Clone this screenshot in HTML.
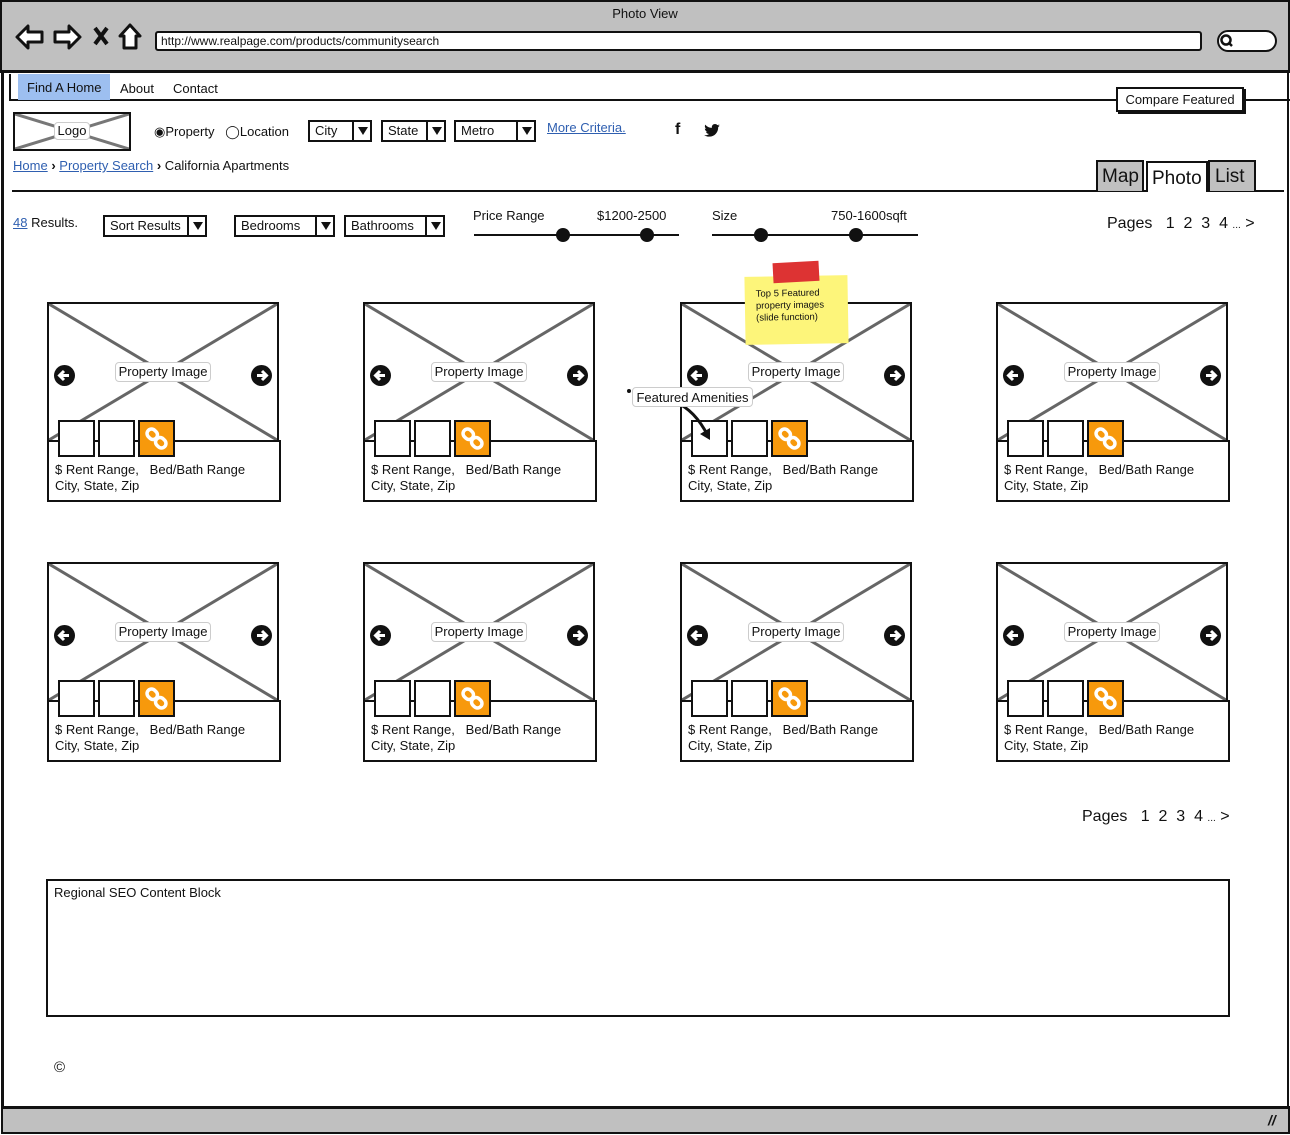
<!DOCTYPE html>
<html><head><meta charset="utf-8">
<style>
*{box-sizing:border-box;margin:0;padding:0}
body{width:1290px;height:1135px;position:relative;background:#fff;font-family:"Liberation Sans",sans-serif;font-size:13px;color:#111;overflow:hidden}
.a{position:absolute}
.lnk{color:#2f5fb0;text-decoration:underline}
.dd{position:absolute;height:22px;border:2px solid #111;background:#fff;padding-left:5px;line-height:18px;font-size:13px}
.dd b{position:absolute;right:0;top:0;width:18px;height:18px;border-left:2px solid #111}
.dd b:after{content:"";position:absolute;left:4px;top:5px;border-left:5px solid transparent;border-right:5px solid transparent;border-top:8px solid #111}
.card{position:absolute;width:236px;height:200px}
.img{position:absolute;left:0;top:0;width:232px;height:140px;border:2px solid #111;background:#fff}
.img svg{position:absolute;left:0;top:0}
.info{position:absolute;left:0;top:138px;width:234px;height:62px;border:2px solid #111;background:#fff;padding:20px 0 0 6px;line-height:16px;font-size:13px}
.th{position:absolute;top:118px;width:37px;height:37px;border:2px solid #111;background:#fff}
.th.o{background:#f7990c}
.arr{position:absolute;top:61px;width:21px;height:21px;border-radius:50%;background:#111}
.arr svg{position:absolute;left:0;top:0}
.lab{position:absolute;top:58px;left:66px;width:96px;height:20px;border:1px solid #ccc;border-radius:4px;background:#fff;text-align:center;line-height:18px;font-size:13px}
.dot{position:absolute;width:14px;height:14px;border-radius:50%;background:#111}
</style></head><body>
<div class="a" style="left:0;top:0;width:1290px;height:73px;background:#c0c0c0;border:2px solid #111;border-bottom:3px solid #111"></div>
<div class="a" style="left:0;top:6px;width:1290px;text-align:center;font-size:13px">Photo View</div>
<svg class="a" style="left:14px;top:22px" width="135" height="30" viewBox="0 0 135 30">
<path d="M3 15 L14 4 L14 10 L28 10 L28 20 L14 20 L14 26 Z" fill="#fff" stroke="#111" stroke-width="3" stroke-linejoin="round"/>
<path d="M66 15 L55 4 L55 10 L41 10 L41 20 L55 20 L55 26 Z" fill="#fff" stroke="#111" stroke-width="3" stroke-linejoin="round"/>
<path d="M81 6 L93 22 M93 6 L81 22" stroke="#111" stroke-width="4"/>
<path d="M106 14 L116 3 L126 14 L122 14 L122 26 L110 26 L110 14 Z" fill="#fff" stroke="#111" stroke-width="3" stroke-linejoin="round"/>
</svg>
<div class="a" style="left:155px;top:31px;width:1047px;height:20px;background:#fff;border:2px solid #111;border-radius:3px;padding-left:4px;line-height:16px;font-size:12px">http://www.realpage.com/products/communitysearch</div>
<div class="a" style="left:1217px;top:30px;width:60px;height:22px;background:#fff;border:2px solid #111;border-radius:11px"></div>
<svg class="a" style="left:1219px;top:33px" width="16" height="16"><circle cx="7" cy="7" r="4.5" stroke="#111" stroke-width="2.5" fill="none"/><path d="M10 10L13 13" stroke="#111" stroke-width="2.5"/></svg>
<div class="a" style="left:1px;top:73px;width:1288px;height:1036px;border-left:3px solid #111;border-right:2px solid #111"></div>
<div class="a" style="left:9px;top:74px;width:1281px;height:27px;border:2px solid #111;border-top:none;border-right:none"></div>
<div class="a" style="left:18px;top:74px;width:92px;height:26px;background:#9dbff0;line-height:28px;padding-left:9px">Find A Home</div>
<div class="a" style="left:120px;top:81px">About</div>
<div class="a" style="left:173px;top:81px">Contact</div>
<div class="a" style="left:1116px;top:87px;width:128px;height:25px;border:2px solid #111;background:#fff;box-shadow:2px 2px 0 #111;text-align:center;line-height:21px">Compare Featured</div>
<div class="a" style="left:13px;top:112px;width:118px;height:39px;border:2px solid #111"></div>
<svg class="a" style="left:15px;top:114px" width="114" height="35"><path d="M0 0 L114 35 M114 0 L0 35" stroke="#777" stroke-width="3"/></svg>
<div class="a" style="left:54px;top:122px;width:36px;height:18px;background:#fff;border:1px solid #ccc;border-radius:4px;text-align:center;line-height:16px">Logo</div>
<div class="a" style="left:154px;top:124px">◉Property&nbsp;&nbsp; ◯Location</div>
<div class="dd" style="left:308px;top:120px;width:64px">City<b></b></div>
<div class="dd" style="left:381px;top:120px;width:65px">State<b></b></div>
<div class="dd" style="left:454px;top:120px;width:82px">Metro<b></b></div>
<div class="a lnk" style="left:547px;top:120px">More Criteria.</div>
<div class="a" style="left:675px;top:121px;font-weight:bold;font-size:16px">f</div>
<svg class="a" style="left:704px;top:124px" width="16" height="13" viewBox="0 0 24 20"><path d="M24 2.4c-.9.4-1.8.7-2.8.8 1-.6 1.8-1.6 2.2-2.7-1 .6-2 1-3.1 1.2C19.3.7 18 0 16.6 0c-2.7 0-4.900 2.2-4.900 4.900 0 .4 0 .8.1 1.100C7.7 5.8 4.1 3.9 1.7.9c-.4.7-.7 1.6-.7 2.5 0 1.7.9 3.2 2.2 4.1-.8 0-1.600-.2-2.200-.6v.1c0 2.4 1.7 4.4 3.9 4.8-.4.1-.8.2-1.3.2-.3 0-.6 0-.9-.1.6 2 2.4 3.4 4.6 3.4-1.7 1.3-3.8 2.1-6.1 2.1-.4 0-.8 0-1.2-.1 2.2 1.4 4.8 2.2 7.5 2.2 9.1 0 14-7.5 14-14v-.6c1-.7 1.8-1.6 2.5-2.5z" fill="#111"/></svg>
<div class="a" style="left:13px;top:158px"><span class="lnk">Home</span> <b>›</b> <span class="lnk">Property Search</span> <b>›</b> California Apartments</div>
<div class="a" style="left:12px;top:190px;width:1272px;height:2px;background:#111"></div>
<div class="a" style="left:1096px;top:160px;width:48px;height:31px;background:#c0c0c0;border:2px solid #111;border-bottom:none;font-size:19px;padding-left:4px;line-height:30px">Map</div>
<div class="a" style="left:1208px;top:160px;width:48px;height:31px;background:#c0c0c0;border:2px solid #111;border-bottom:none;font-size:19px;padding-left:5px;line-height:30px">List</div>
<div class="a" style="left:1146px;top:161px;width:62px;height:31px;background:#fff;border:2px solid #111;border-bottom:none;font-size:19px;padding-left:4px;line-height:32px">Photo</div>
<div class="a" style="left:13px;top:215px"><span class="lnk">48</span> Results.</div>
<div class="dd" style="left:103px;top:215px;width:104px">Sort Results<b></b></div>
<div class="dd" style="left:234px;top:215px;width:101px">Bedrooms<b></b></div>
<div class="dd" style="left:344px;top:215px;width:101px">Bathrooms<b></b></div>
<div class="a" style="left:473px;top:208px">Price Range</div>
<div class="a" style="left:597px;top:208px">$1200-2500</div>
<div class="a" style="left:474px;top:234px;width:205px;height:2px;background:#111"></div>
<div class="dot" style="left:556px;top:228px"></div><div class="dot" style="left:640px;top:228px"></div>
<div class="a" style="left:712px;top:208px">Size</div>
<div class="a" style="left:831px;top:208px">750-1600sqft</div>
<div class="a" style="left:712px;top:234px;width:206px;height:2px;background:#111"></div>
<div class="dot" style="left:754px;top:228px"></div><div class="dot" style="left:849px;top:228px"></div>
<div class="a" style="left:1107px;top:215px;font-size:16px">Pages &nbsp; 1&nbsp; 2&nbsp; 3&nbsp; 4 <span style="font-size:10px">...</span> &gt;</div>

<div class="card" style="left:47px;top:302px"><div class="img"><svg width="228" height="136"><path d="M0 0L228 136M228 0L0 136" stroke="#666" stroke-width="3"/></svg><div class="arr" style="left:5px"><svg width="21" height="21"><path d="M15 10.5H6M10 6L5.5 10.5L10 15" stroke="#fff" stroke-width="3" fill="none"/></svg></div><div class="arr" style="left:202px"><svg width="21" height="21"><path d="M6 10.5H15M11 6L15.5 10.5L11 15" stroke="#fff" stroke-width="3" fill="none"/></svg></div><div class="lab">Property Image</div></div><div class="info">$ Rent Range, &nbsp;&nbsp;Bed/Bath Range<br>City, State, Zip</div><div class="th" style="left:11px"></div><div class="th" style="left:51px"></div><div class="th o" style="left:91px"><svg width="33" height="33"><g transform="rotate(45 16.5 16.5)" stroke="#fff" stroke-width="3.5" fill="none"><rect x="5" y="12" width="11" height="9" rx="4.5"/><rect x="17" y="12" width="11" height="9" rx="4.5"/></g></svg></div></div>
<div class="card" style="left:363px;top:302px"><div class="img"><svg width="228" height="136"><path d="M0 0L228 136M228 0L0 136" stroke="#666" stroke-width="3"/></svg><div class="arr" style="left:5px"><svg width="21" height="21"><path d="M15 10.5H6M10 6L5.5 10.5L10 15" stroke="#fff" stroke-width="3" fill="none"/></svg></div><div class="arr" style="left:202px"><svg width="21" height="21"><path d="M6 10.5H15M11 6L15.5 10.5L11 15" stroke="#fff" stroke-width="3" fill="none"/></svg></div><div class="lab">Property Image</div></div><div class="info">$ Rent Range, &nbsp;&nbsp;Bed/Bath Range<br>City, State, Zip</div><div class="th" style="left:11px"></div><div class="th" style="left:51px"></div><div class="th o" style="left:91px"><svg width="33" height="33"><g transform="rotate(45 16.5 16.5)" stroke="#fff" stroke-width="3.5" fill="none"><rect x="5" y="12" width="11" height="9" rx="4.5"/><rect x="17" y="12" width="11" height="9" rx="4.5"/></g></svg></div></div>
<div class="card" style="left:680px;top:302px"><div class="img"><svg width="228" height="136"><path d="M0 0L228 136M228 0L0 136" stroke="#666" stroke-width="3"/></svg><div class="arr" style="left:5px"><svg width="21" height="21"><path d="M15 10.5H6M10 6L5.5 10.5L10 15" stroke="#fff" stroke-width="3" fill="none"/></svg></div><div class="arr" style="left:202px"><svg width="21" height="21"><path d="M6 10.5H15M11 6L15.5 10.5L11 15" stroke="#fff" stroke-width="3" fill="none"/></svg></div><div class="lab">Property Image</div></div><div class="info">$ Rent Range, &nbsp;&nbsp;Bed/Bath Range<br>City, State, Zip</div><div class="th" style="left:11px"></div><div class="th" style="left:51px"></div><div class="th o" style="left:91px"><svg width="33" height="33"><g transform="rotate(45 16.5 16.5)" stroke="#fff" stroke-width="3.5" fill="none"><rect x="5" y="12" width="11" height="9" rx="4.5"/><rect x="17" y="12" width="11" height="9" rx="4.5"/></g></svg></div></div>
<div class="card" style="left:996px;top:302px"><div class="img"><svg width="228" height="136"><path d="M0 0L228 136M228 0L0 136" stroke="#666" stroke-width="3"/></svg><div class="arr" style="left:5px"><svg width="21" height="21"><path d="M15 10.5H6M10 6L5.5 10.5L10 15" stroke="#fff" stroke-width="3" fill="none"/></svg></div><div class="arr" style="left:202px"><svg width="21" height="21"><path d="M6 10.5H15M11 6L15.5 10.5L11 15" stroke="#fff" stroke-width="3" fill="none"/></svg></div><div class="lab">Property Image</div></div><div class="info">$ Rent Range, &nbsp;&nbsp;Bed/Bath Range<br>City, State, Zip</div><div class="th" style="left:11px"></div><div class="th" style="left:51px"></div><div class="th o" style="left:91px"><svg width="33" height="33"><g transform="rotate(45 16.5 16.5)" stroke="#fff" stroke-width="3.5" fill="none"><rect x="5" y="12" width="11" height="9" rx="4.5"/><rect x="17" y="12" width="11" height="9" rx="4.5"/></g></svg></div></div>
<div class="card" style="left:47px;top:562px"><div class="img"><svg width="228" height="136"><path d="M0 0L228 136M228 0L0 136" stroke="#666" stroke-width="3"/></svg><div class="arr" style="left:5px"><svg width="21" height="21"><path d="M15 10.5H6M10 6L5.5 10.5L10 15" stroke="#fff" stroke-width="3" fill="none"/></svg></div><div class="arr" style="left:202px"><svg width="21" height="21"><path d="M6 10.5H15M11 6L15.5 10.5L11 15" stroke="#fff" stroke-width="3" fill="none"/></svg></div><div class="lab">Property Image</div></div><div class="info">$ Rent Range, &nbsp;&nbsp;Bed/Bath Range<br>City, State, Zip</div><div class="th" style="left:11px"></div><div class="th" style="left:51px"></div><div class="th o" style="left:91px"><svg width="33" height="33"><g transform="rotate(45 16.5 16.5)" stroke="#fff" stroke-width="3.5" fill="none"><rect x="5" y="12" width="11" height="9" rx="4.5"/><rect x="17" y="12" width="11" height="9" rx="4.5"/></g></svg></div></div>
<div class="card" style="left:363px;top:562px"><div class="img"><svg width="228" height="136"><path d="M0 0L228 136M228 0L0 136" stroke="#666" stroke-width="3"/></svg><div class="arr" style="left:5px"><svg width="21" height="21"><path d="M15 10.5H6M10 6L5.5 10.5L10 15" stroke="#fff" stroke-width="3" fill="none"/></svg></div><div class="arr" style="left:202px"><svg width="21" height="21"><path d="M6 10.5H15M11 6L15.5 10.5L11 15" stroke="#fff" stroke-width="3" fill="none"/></svg></div><div class="lab">Property Image</div></div><div class="info">$ Rent Range, &nbsp;&nbsp;Bed/Bath Range<br>City, State, Zip</div><div class="th" style="left:11px"></div><div class="th" style="left:51px"></div><div class="th o" style="left:91px"><svg width="33" height="33"><g transform="rotate(45 16.5 16.5)" stroke="#fff" stroke-width="3.5" fill="none"><rect x="5" y="12" width="11" height="9" rx="4.5"/><rect x="17" y="12" width="11" height="9" rx="4.5"/></g></svg></div></div>
<div class="card" style="left:680px;top:562px"><div class="img"><svg width="228" height="136"><path d="M0 0L228 136M228 0L0 136" stroke="#666" stroke-width="3"/></svg><div class="arr" style="left:5px"><svg width="21" height="21"><path d="M15 10.5H6M10 6L5.5 10.5L10 15" stroke="#fff" stroke-width="3" fill="none"/></svg></div><div class="arr" style="left:202px"><svg width="21" height="21"><path d="M6 10.5H15M11 6L15.5 10.5L11 15" stroke="#fff" stroke-width="3" fill="none"/></svg></div><div class="lab">Property Image</div></div><div class="info">$ Rent Range, &nbsp;&nbsp;Bed/Bath Range<br>City, State, Zip</div><div class="th" style="left:11px"></div><div class="th" style="left:51px"></div><div class="th o" style="left:91px"><svg width="33" height="33"><g transform="rotate(45 16.5 16.5)" stroke="#fff" stroke-width="3.5" fill="none"><rect x="5" y="12" width="11" height="9" rx="4.5"/><rect x="17" y="12" width="11" height="9" rx="4.5"/></g></svg></div></div>
<div class="card" style="left:996px;top:562px"><div class="img"><svg width="228" height="136"><path d="M0 0L228 136M228 0L0 136" stroke="#666" stroke-width="3"/></svg><div class="arr" style="left:5px"><svg width="21" height="21"><path d="M15 10.5H6M10 6L5.5 10.5L10 15" stroke="#fff" stroke-width="3" fill="none"/></svg></div><div class="arr" style="left:202px"><svg width="21" height="21"><path d="M6 10.5H15M11 6L15.5 10.5L11 15" stroke="#fff" stroke-width="3" fill="none"/></svg></div><div class="lab">Property Image</div></div><div class="info">$ Rent Range, &nbsp;&nbsp;Bed/Bath Range<br>City, State, Zip</div><div class="th" style="left:11px"></div><div class="th" style="left:51px"></div><div class="th o" style="left:91px"><svg width="33" height="33"><g transform="rotate(45 16.5 16.5)" stroke="#fff" stroke-width="3.5" fill="none"><rect x="5" y="12" width="11" height="9" rx="4.5"/><rect x="17" y="12" width="11" height="9" rx="4.5"/></g></svg></div></div>

<div class="a" style="left:745px;top:276px;width:103px;height:68px;background:#fdf57a;transform:rotate(-1deg);padding:12px 0 0 11px;font-size:9.5px;line-height:12px">Top 5 Featured<br>property images<br>(slide function)</div>
<div class="a" style="left:773px;top:262px;width:46px;height:20px;background:#dd3333;transform:rotate(-3deg)"></div>
<div class="a" style="left:627px;top:389px;width:4px;height:4px;background:#111;border-radius:50%"></div>
<svg class="a" style="left:670px;top:400px" width="50" height="45"><path d="M5 2 Q25 10 38 36" stroke="#111" stroke-width="3" fill="none"/><path d="M30 34 L40 40 L40 28 Z" fill="#111"/></svg>
<div class="a" style="left:632px;top:387px;width:121px;height:20px;background:#fff;border:1px solid #ccc;border-radius:4px;text-align:center;line-height:19px">Featured Amenities</div>

<div class="a" style="left:1082px;top:808px;font-size:16px">Pages &nbsp; 1&nbsp; 2&nbsp; 3&nbsp; 4 <span style="font-size:10px">...</span> &gt;</div>
<div class="a" style="left:46px;top:879px;width:1184px;height:138px;border:2px solid #111;padding:4px 0 0 6px">Regional SEO Content Block</div>
<div class="a" style="left:54px;top:1059px;font-size:15px">©</div>
<div class="a" style="left:1px;top:1106px;width:1289px;height:28px;background:#c0c0c0;border:2px solid #111;border-top:3px solid #111"></div>
<div class="a" style="left:1268px;top:1112px;font-size:14px;font-weight:bold;font-style:italic">//</div>
</body></html>
